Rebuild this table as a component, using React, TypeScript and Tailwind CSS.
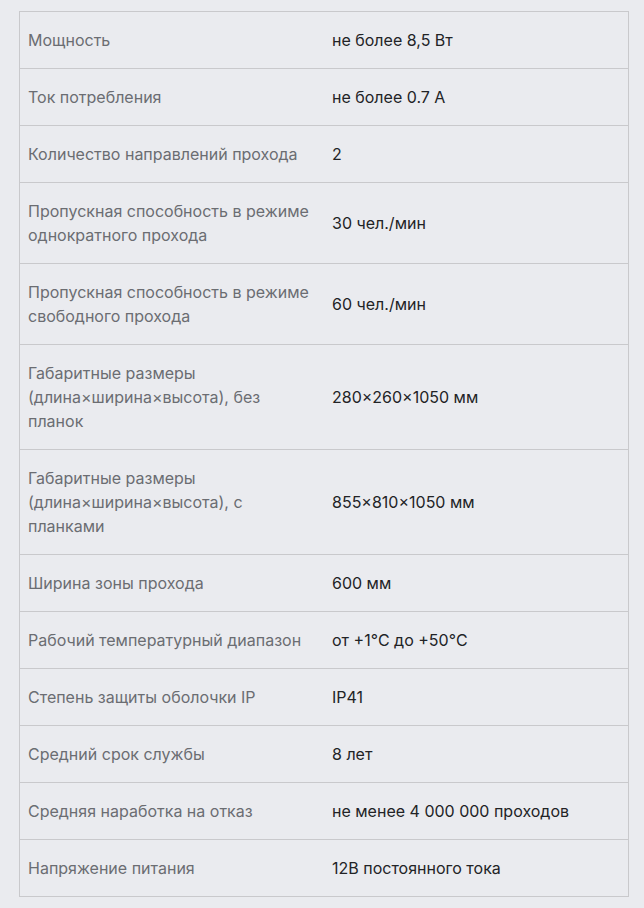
import React from "react";

const rows: [string, string][] = [
  ["Мощность", "не более 8,5 Вт"],
  ["Ток потребления", "не более 0.7 А"],
  ["Количество направлений прохода", "2"],
  ["Пропускная способность в режиме однократного прохода", "30 чел./мин"],
  ["Пропускная способность в режиме свободного прохода", "60 чел./мин"],
  ["Габаритные размеры (длина×ширина×высота), без планок", "280×260×1050 мм"],
  ["Габаритные размеры (длина×ширина×высота), с планками", "855×810×1050 мм"],
  ["Ширина зоны прохода", "600 мм"],
  ["Рабочий температурный диапазон", "от +1°C до +50°C"],
  ["Степень защиты оболочки IP", "IP41"],
  ["Средний срок службы", "8 лет"],
  ["Средняя наработка на отказ", "не менее 4 000 000 проходов"],
  ["Напряжение питания", "12В постоянного тока"],
];

export default function App() {
  return (
    <div className="min-h-[908px] w-[644px] bg-[#eaebef] pt-[11px] pl-[19px] font-['Inter',sans-serif] text-[16px] leading-6">
      <div className="w-[610px] border border-[#c9c9cc]">
        {rows.map(([k, v], i) => (
          <div
            key={i}
            className={`grid grid-cols-2 ${i > 0 ? "border-t border-[#c9c9cc]" : ""}`}
          >
            <div className="px-2 py-4 text-[#6b6d72]">{k}</div>
            <div className="flex items-center px-2 py-4 text-[#222326]">{v}</div>
          </div>
        ))}
      </div>
    </div>
  );
}
